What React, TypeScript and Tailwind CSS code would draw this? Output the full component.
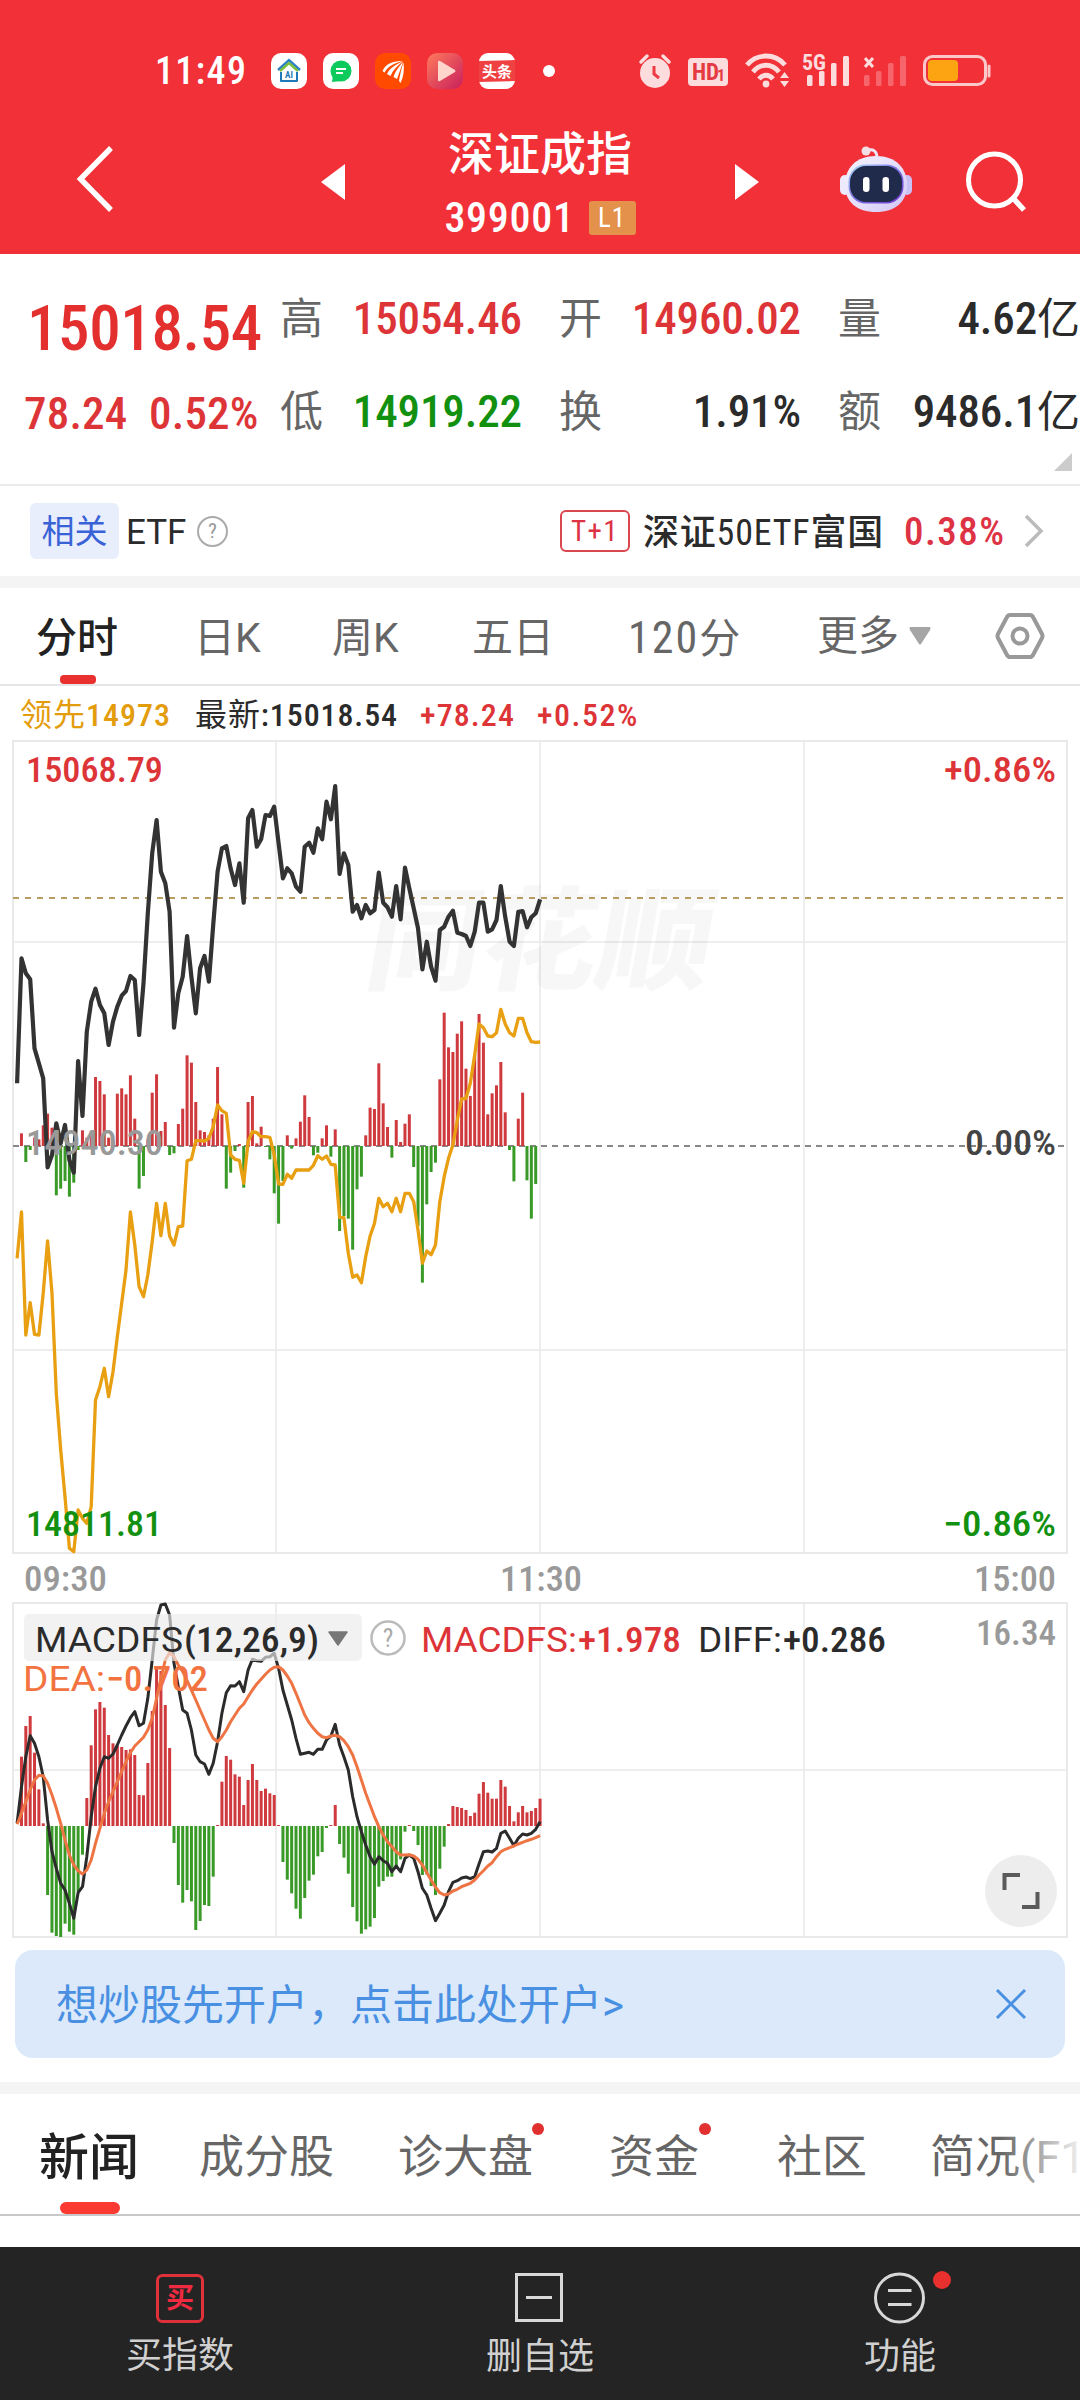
import type { ReactNode } from "react";

const PRICE = [
  1060, 685, 730, 748, 955, 1000, 1045, 1312, 1275, 1180, 1240, 1185, 1290, 1328, 993, 1158, 905, 815, 776, 825,
  850, 945, 875, 830, 797, 783, 738, 750, 915, 760, 550, 370, 270, 425, 460, 545, 893, 790, 740, 618,
  740, 850, 715, 678, 755, 585, 425, 355, 348, 415, 465, 400, 518, 265, 240, 350, 328, 255, 258, 230,
  340, 445, 415, 430, 470, 485, 350, 338, 368, 295, 328, 215, 268, 168, 432, 370, 405, 545, 525, 565,
  525, 550, 540, 428, 518, 532, 560, 468, 568, 413, 475, 535, 595, 718, 635, 710, 752, 600, 590, 560,
  542, 608, 612, 618, 648, 605, 518, 518, 605, 598, 570, 468, 560, 635, 648, 545, 543, 592, 562, 550, 508,
];

const LEAD = [
  1585, 1446, 1815, 1718, 1813, 1815, 1690, 1533, 1690, 1990, 2160, 2300, 2455, 2465, 2340, 2365, 2380, 2330, 2010, 1970,
  1915, 2000, 1925, 1820, 1720, 1620, 1446, 1545, 1670, 1700, 1635, 1535, 1420, 1517, 1420, 1518, 1545, 1490, 1488, 1292,
  1288, 1232, 1232, 1233, 1225, 1190, 1125, 1142, 1150, 1275, 1288, 1291, 1360, 1235, 1205, 1208, 1220, 1220, 1222, 1275,
  1362, 1363, 1333, 1345, 1320, 1320, 1320, 1320, 1306, 1277, 1288, 1278, 1303, 1305, 1462, 1463, 1570, 1642, 1635, 1658,
  1580, 1518, 1480, 1405, 1430, 1420, 1445, 1405, 1445, 1390, 1390, 1415, 1500, 1600, 1563, 1574, 1545, 1415, 1340, 1285,
  1245, 1170, 1107, 1105, 1060, 975, 882, 893, 918, 920, 908, 838, 882, 908, 918, 865, 865, 908, 935, 937, 936,
];

const FLOW = [
  0, 38, -48, -12, 25, 20, 62, 97, 55, -148, -128, -105, -152, -110, -12, 47, 25, 45, 207, 195,
  155, 25, 15, 157, 173, 155, 212, 82, -128, -90, 20, 160, 215, 45, 72, -27, -22, 66, 112, 272,
  250, 132, 47, 42, 32, 82, 237, 95, -128, -80, -15, 6, -125, 132, 150, 8, 58, -2, -40, -142,
  -233, -105, 32, -8, 23, 73, 152, 87, -28, -20, 23, 62, -32, 50, -255, -210, -218, -311, -130, -92,
  32, 115, 111, 248, 128, 57, -35, 78, 12, 67, 95, -63, -240, -410, -175, -78, -50, 200, 400, 296,
  282, 337, 374, 232, 150, 275, 396, 310, 95, 158, 182, 252, 101, -12, -106, 82, 160, -103, -218, -114, 0,
];

const MACD = [
  0, 208, 300, 330, 220, 110, 8, -207, -320, -330, -333, -293, -317, -326, -197, -86, 84, 242, 350, 372,
  355, 273, 248, 240, 237, 228, 230, 213, 93, 92, 189, 345, 475, 465, 363, 234, -51, -177, -230, -192,
  -226, -312, -285, -237, -240, -152, 3, 133, 210, 199, 155, 148, 63, 138, 186, 138, 105, 112, 98, 93,
  3, -108, -161, -202, -248, -278, -216, -164, -146, -91, -78, -6, 3, 63, -54, -95, -143, -243, -286, -323,
  -310, -302, -276, -182, -165, -152, -152, -125, -100, -17, 3, -15, -57, -147, -145, -180, -207, -128, -62, 6,
  60, 57, 54, 48, 30, 40, 97, 132, 100, 82, 82, 138, 118, 60, 14, 41, 60, 41, 45, 54, 82,
];

const DIFF = [
  700, 590, 500, 437, 460, 500, 560, 690, 785, 835, 880, 900, 940, 985, 908, 890, 800, 680, 590, 535,
  500, 505, 492, 465, 435, 408, 383, 365, 407, 400, 325, 210, 90, 45, 42, 75, 220, 290, 360, 370,
  420, 495, 515, 522, 553, 520, 455, 370, 308, 287, 288, 275, 305, 240, 208, 212, 214, 202, 200, 190,
  235, 300, 345, 390, 445, 493, 490, 487, 493, 478, 478, 450, 438, 403, 465, 500, 540, 620, 680, 725,
  765, 800, 823, 800, 812, 820, 845, 828, 845, 805, 795, 805, 845, 895, 915, 955, 992, 970, 945, 905,
  877, 872, 864, 861, 866, 860, 822, 785, 783, 786, 775, 730, 723, 745, 767, 745, 732, 735, 730, 718, 695,
];

const DEA = [
  703, 670, 635, 600, 570, 556, 557, 580, 615, 655, 700, 750, 795, 825, 842, 852, 840, 810, 760, 715,
  670, 635, 605, 575, 545, 515, 488, 468, 455, 442, 420, 385, 325, 265, 210, 188, 200, 225, 245, 272,
  300, 330, 360, 390, 420, 445, 455, 440, 420, 395, 375, 355, 342, 320, 300, 282, 268, 253, 240, 232,
  230, 240, 258, 280, 310, 343, 375, 398, 415, 430, 440, 443, 438, 436, 440, 452, 470, 495, 530, 570,
  610, 645, 680, 710, 735, 755, 770, 785, 795, 795, 794, 798, 808, 825, 848, 870, 892, 908, 915, 912,
  903, 898, 890, 885, 880, 870, 855, 842, 828, 818, 800, 785, 778, 773, 768, 762, 757, 752, 748, 743, 737,
];

const px = (i: number) => 17.1 + i * 4.358;
const line = (d: number[], top: number) =>
  d.map((v, i) => `${px(i).toFixed(1)},${(top + v / 3).toFixed(1)}`).join(" ");

function Bars({ data, base }: { data: number[]; base: number }) {
  return (
    <g>
      {data.map((v, i) =>
        v === 0 ? null : (
          <rect
            key={i}
            x={px(i) - 1.5}
            width={3}
            y={v > 0 ? base - v / 3 : base}
            height={Math.max(1, Math.abs(v) / 3)}
            className={v > 0 ? "fill-[#cf3a3e]" : "fill-[#3a9a28]"}
          />
        )
      )}
    </g>
  );
}

function Label({
  x,
  y,
  w,
  className,
  children,
  wide,
}: {
  x: number;
  y: number;
  w: number;
  className: string;
  children: ReactNode;
  wide?: boolean;
}) {
  return (
    <text
      x={x}
      y={y}
      textLength={w}
      lengthAdjust="spacingAndGlyphs"
      className={(wide ? "font-['Roboto',sans-serif] " : "font-['Roboto_Condensed',sans-serif] font-medium ") + "text-[35px] " + className}
    >
      {children}
    </text>
  );
}

function StatusBar() {
  return (
    <div className="flex h-[36px] items-center pl-[155px]">
      <span className="w-[116px] text-[38px] leading-[36px] font-medium tracking-[1.3px]">11:49</span>
      <div className="flex gap-4">
        <svg width="36" height="36" viewBox="0 0 36 36">
          <rect width="36" height="36" rx="10" fill="#fff" />
          <path d="M7 17 L18 7 L29 17" fill="none" stroke="#2b7fc4" strokeWidth="2.4" />
          <path d="M9 18 L18 10 L27 18" fill="none" stroke="#7cbf3f" strokeWidth="2.4" />
          <path d="M10 19 V28 H26 V19" fill="none" stroke="#1f78b8" strokeWidth="2" strokeLinejoin="round" />
          <text x="18" y="25" textAnchor="middle" className="fill-[#1f78b8] text-[9px] font-bold">AI</text>
        </svg>
        <svg width="36" height="36" viewBox="0 0 36 36">
          <rect width="36" height="36" rx="10" fill="#fff" />
          <circle cx="18" cy="18" r="10.5" fill="#0ccb5c" />
          <path d="M10 22 L9 29 L18 28Z" fill="#0ccb5c" />
          <path d="M13 16 H23 M13 20 H20" stroke="#fff" strokeWidth="1.8" />
        </svg>
        <svg width="36" height="36" viewBox="0 0 36 36">
          <rect width="36" height="36" rx="10" fill="#ff4a00" />
          <path d="M7.500 18 C11 10 19 8 28 8 C20 10 13 13 9.500 19.500Z" fill="#fff" />
          <path d="M12 21 C15 15 21 11 28 8.500 C22 13 18 17 15.500 23Z" fill="#fff" />
          <path d="M18.500 24 C20 19 24 13 28.300 9 C26 15 24 20 22 26Z" fill="#fff" />
          <path d="M24 28 C25 21 26.500 15 28.500 9.500 C29.500 17 28.500 24 25.500 30Z" fill="#fff" />
        </svg>
        <svg width="36" height="36" viewBox="0 0 36 36">
          <defs>
            <linearGradient id="play" x1="0" y1="0" x2="1" y2="1">
              <stop offset="0" stopColor="#ff7a5c" />
              <stop offset="1" stopColor="#c81f5c" />
            </linearGradient>
          </defs>
          <rect width="36" height="36" rx="10" fill="url(#play)" />
          <path d="M11 9 Q11 7 13 8 L28 17 Q29 18 28 19 L13 28 Q11 29 11 27Z" fill="#ffd5cc" />
        </svg>
        <svg width="36" height="36" viewBox="0 0 36 36">
          <rect width="36" height="36" rx="9" fill="#fff" />
          <path d="M0 8 L36 7 V28 L0 29Z" fill="#f04142" />
          <text x="18" y="24" textAnchor="middle" className="fill-white text-[15px] font-bold">头条</text>
        </svg>
      </div>
      <span className="ml-[28px] h-3 w-3 rounded-full bg-white" />
      <div className="ml-[84px] flex h-[36px] items-center">
        <svg width="32" height="36" viewBox="0 0 32 36" className="mr-[17px]">
          <circle cx="16" cy="20" r="15" fill="#fcdcdd" />
          <path d="M2 9 L8 3 M30 9 L24 3" stroke="#fcdcdd" strokeWidth="3.4" strokeLinecap="round" />
          <path d="M15 13 V21 L20 25" fill="none" stroke="#ee3a42" strokeWidth="3" />
        </svg>
        <svg width="40" height="36" viewBox="0 0 40 36" className="mr-[17px]">
          <rect y="5" width="40" height="28" rx="4" fill="#fcdcdd" />
          <text x="4" y="27" className="fill-[#e63a42] text-[23px] font-bold">HD</text>
          <text x="29" y="28" className="fill-[#e63a42] text-[16px] font-bold">1</text>
        </svg>
        <svg width="46" height="36" viewBox="0 0 46 36" className="mr-[12px]">
          <g fill="none" stroke="#fcdcdd" strokeWidth="4.8">
            <path d="M2 12 C12 0 30 0 40 12" />
            <path d="M8 19 C15 10 27 10 34 19" />
            <path d="M14 26 C18 21 24 21 28 26" />
          </g>
          <circle cx="21" cy="31" r="3.4" fill="#fcdcdd" />
          <path d="M35 25 L39.500 19 L44 25Z M35 28 L39.500 34 L44 28Z" fill="#fcdcdd" />
        </svg>
        <svg width="48" height="36" viewBox="0 0 48 36" className="mr-[13px] overflow-visible">
          <text x="-1" y="17" className="fill-[#fcdcdd] text-[22px] font-bold">5G</text>
          <g fill="#fcdcdd">
            <rect x="4" y="22" width="5.500" height="11" rx="1.500" />
            <rect x="16" y="18" width="5.500" height="15" rx="1.500" />
            <rect x="28" y="10" width="5.500" height="23" rx="1.500" />
            <rect x="40" y="3" width="6" height="30" rx="1.500" />
          </g>
        </svg>
        <svg width="46" height="36" viewBox="0 0 46 36" className="mr-[13px]">
          <path d="M1 5 L9 14 M9 5 L1 14" stroke="#fcdcdd" strokeWidth="3" />
          <g fill="#f6656b">
            <rect x="0" y="22" width="5.500" height="11" rx="1.500" />
            <rect x="12" y="18" width="5.500" height="15" rx="1.500" />
            <rect x="24" y="10" width="5.500" height="23" rx="1.500" />
            <rect x="36" y="3" width="6" height="30" rx="1.500" />
          </g>
        </svg>
        <svg width="68" height="36" viewBox="0 0 68 36">
          <rect x="1.500" y="3.500" width="61" height="28" rx="8" fill="none" stroke="#fbc8ca" strokeWidth="3" />
          <rect x="5" y="7" width="30" height="21" rx="4" fill="#fda413" />
          <path d="M66 13 V23" stroke="#fbc8ca" strokeWidth="3" strokeLinecap="round" />
        </svg>
      </div>
    </div>
  );
}

function Robot() {
  return (
    <svg width="72" height="68" viewBox="0 0 72 68">
      <defs>
        <linearGradient id="shell" x1="0" y1="0" x2="1" y2="1">
          <stop offset="0" stopColor="#f4f3ff" />
          <stop offset="0.600" stopColor="#e3dcfa" />
          <stop offset="1" stopColor="#cfc4f5" />
        </linearGradient>
        <linearGradient id="rim" x1="0" y1="0" x2="1" y2="1">
          <stop offset="0" stopColor="#a9dcf5" />
          <stop offset="0.500" stopColor="#7c6fe0" />
          <stop offset="1" stopColor="#6a35c8" />
        </linearGradient>
      </defs>
      <path d="M26 5 C33 2 37 5 37 12" fill="none" stroke="#efe6f5" strokeWidth="3" />
      <circle cx="26" cy="5" r="4.500" fill="#f3dfe6" />
      <rect x="0" y="29" width="10" height="20" rx="5" fill="#eceafc" />
      <rect x="62" y="29" width="10" height="20" rx="5" fill="#c9c0f5" />
      <path d="M36 10 C56 10 67 22 67 39 C67 56 55 66 36 66 C17 66 5 56 5 39 C5 22 16 10 36 10Z" fill="url(#shell)" />
      <rect x="8.500" y="18.500" width="55" height="39" rx="17" fill="url(#rim)" />
      <rect x="10" y="20" width="52" height="36" rx="16" fill="#202b4c" />
      <rect x="23" y="31" width="6.500" height="15" rx="3.200" fill="#fff" />
      <rect x="42.500" y="31" width="6.500" height="15" rx="3.200" fill="#fff" />
    </svg>
  );
}

function Header() {
  return (
    <header className="h-[254px] bg-[#f13038] pt-[53px] text-white">
      <StatusBar />
      <div className="flex h-[165px] pl-[74px]">
        <svg width="40" height="70" viewBox="0 0 40 70" className="mt-[55px]">
          <path d="M37 4 L6.500 35 L37 66" fill="none" stroke="#fff" strokeWidth="5.500" />
        </svg>
        <svg width="24" height="36" viewBox="0 0 24 36" className="mt-[75px] ml-[207px]">
          <path d="M0 18 L24 0 V36Z" fill="#fff" />
        </svg>
        <div className="flex w-[390px] flex-col items-center">
          <h1 className="mt-[37px] text-[46px] leading-[56px] font-medium">深证成指</h1>
          <div className="mt-[18px] flex h-[36px] items-center">
            <span className="text-[42px] leading-[36px] font-medium tracking-[0.7px]">399001</span>
            <span className="ml-[14px] flex h-[34px] w-[47px] items-center justify-center rounded-[3px] bg-[#e3914b] text-[27px] leading-[34px] tracking-[1px]">
              L1
            </span>
          </div>
        </div>
        <svg width="24" height="36" viewBox="0 0 24 36" className="mt-[75px]">
          <path d="M24 18 L0 0 V36Z" fill="#fff" />
        </svg>
        <div className="mt-[57px] ml-[81px]">
          <Robot />
        </div>
        <svg width="62" height="62" viewBox="0 0 62 62" className="mt-[62px] ml-[54px]">
          <circle cx="28.500" cy="29" r="26" fill="none" stroke="#fff" strokeWidth="5" />
          <path d="M47 47 L58 59" stroke="#fff" strokeWidth="5.500" />
        </svg>
      </div>
    </header>
  );
}

function Cell({ label, value, color }: { label: string; value: ReactNode; color: string }) {
  return (
    <div className="flex h-[50px] w-[242px] items-center justify-between whitespace-nowrap">
      <span className="text-[43px] leading-[50px] text-[#666]">{label}</span>
      <span className={"text-[45px] leading-[50px] font-medium tracking-[-0.1px] " + color}>{value}</span>
    </div>
  );
}

function Yi({ children }: { children: ReactNode }) {
  return (
    <>
      {children}
      <span className="text-[43px] font-normal">亿</span>
    </>
  );
}

function Quote() {
  return (
    <section className="relative flex h-[232px] border-b-2 border-[#ebebeb]">
      <div className="w-[280px]">
        <div className="mt-[43px] pl-[27px] text-[63px] leading-[64px] font-medium tracking-[-0.4px] text-[#e3302f]">15018.54</div>
        <div className="mt-[28px] flex pl-[24px] text-[45px] leading-[50px] font-medium tracking-[0.2px] text-[#dd3438]">
          <span className="w-[125px]">78.24</span>
          <span>0.52%</span>
        </div>
      </div>
      <div className="grid w-[800px] grid-cols-[279px_279px_242px] grid-rows-[50px_50px] gap-y-[43px] pt-[40px]">
        <Cell label="高" value="15054.46" color="text-[#dd3438]" />
        <Cell label="开" value="14960.02" color="text-[#dd3438]" />
        <Cell label="量" value={<Yi>4.62</Yi>} color="text-[#2b2b2b]" />
        <Cell label="低" value="14919.22" color="text-[#12900f]" />
        <Cell label="换" value="1.91%" color="text-[#2b2b2b]" />
        <Cell label="额" value={<Yi>9486.1</Yi>} color="text-[#2b2b2b]" />
      </div>
      <svg width="18" height="18" viewBox="0 0 18 18" className="absolute right-[8px] bottom-[13px]">
        <path d="M18 0 V18 H0Z" fill="#ccc" />
      </svg>
    </section>
  );
}

function EtfRow() {
  return (
    <section className="flex h-[90px] items-center pl-[30px] whitespace-nowrap">
      <span className="flex h-[56px] w-[89px] items-center justify-center rounded-[6px] bg-[#e8eefc] pt-[2px] text-[33px] leading-[54px] text-[#3a62d7]">
        相关
      </span>
      <span className="ml-[7px] w-[71px] pt-[3px] font-['Roboto',sans-serif] text-[35px] leading-[40px] text-[#2b2b2b]">ETF</span>
      <span className="flex h-[31px] w-[31px] items-center justify-center rounded-full border-2 border-[#aaa] text-[21px] leading-[28px] text-[#999]">
        ?
      </span>
      <span className="ml-[332px] flex h-[42px] w-[70px] items-center justify-center rounded-[6px] border-2 border-[#d8484e] text-[29px] leading-[38px] tracking-[1.4px] text-[#dd3344]">
        T+1
      </span>
      <span className="ml-[13px] w-[261px] pt-[3px] text-[36px] leading-[40px] font-[450] tracking-[0.8px] text-[#2b2b2b]">深证50ETF富国</span>
      <span className="w-[120px] pt-[2px] text-[39px] leading-[40px] font-medium tracking-[1.5px] text-[#dd3344]">0.38%</span>
      <svg width="20" height="34" viewBox="0 0 20 34">
        <path d="M2 2 L17 17 L2 32" fill="none" stroke="#bbb" strokeWidth="3.500" />
      </svg>
    </section>
  );
}

function PeriodTabs() {
  return (
    <nav className="flex h-[98px] border-b-2 border-[#e6e6e6] pl-[36px] text-[41px] leading-[100px] whitespace-nowrap text-[#666]">
      <div className="relative w-[158px] shrink-0 font-medium text-[#222]">
        <span>分时</span>
        <span className="absolute bottom-0 left-[24px] h-[9px] w-[36px] rounded-[4px] bg-[#e8302f]" />
      </div>
      <div className="w-[138px] shrink-0">日<span className="font-['Roboto',sans-serif]">K</span></div>
      <div className="w-[140px] shrink-0">周<span className="font-['Roboto',sans-serif]">K</span></div>
      <div className="w-[156px] shrink-0">五日</div>
      <div className="w-[189px] shrink-0"><span className="text-[44px] tracking-[2px]">120</span>分</div>
      <div className="flex w-[178px] shrink-0 items-center">
        更多
        <svg width="22" height="18" viewBox="0 0 22 18" className="ml-[10px]">
          <path d="M1 0 H21 Q22 1 21 3 L12 17 Q11 18 10 17 L1 3 Q0 1 1 0Z" fill="#a5a5a5" />
        </svg>
      </div>
      <svg width="50" height="48" viewBox="0 0 50 48" className="mt-[24px] shrink-0">
        <path d="M15 3 H35 Q37 3 38 5 L47 22 Q48 24 47 26 L38 43 Q37 45 35 45 H15 Q13 45 12 43 L3 26 Q2 24 3 22 L12 5 Q13 3 15 3Z" fill="none" stroke="#999" strokeWidth="4" />
        <circle cx="25" cy="24" r="7.500" fill="none" stroke="#999" strokeWidth="4" />
      </svg>
    </nav>
  );
}

function Legend() {
  return (
    <div className="flex h-[54px] pl-[20px] text-[32px] leading-[58px] font-medium whitespace-nowrap">
      <span className="w-[175px] tracking-[1px] text-[#e39c0c]"><span className="font-normal">领先</span>14973</span>
      <span className="w-[225px] tracking-[0.9px] text-[#2b2b2b]"><span className="font-normal">最新</span>:15018.54</span>
      <span className="w-[117px] tracking-[1.1px] text-[#dd3438]">+78.24</span>
      <span className="tracking-[1.5px] text-[#dd3438]">+0.52%</span>
    </div>
  );
}

function IntradayChart() {
  return (
    <svg width="1080" height="863" viewBox="0 740 1080 863" className="block">
      <g stroke="#e9e9e9" strokeWidth="2" fill="none">
        <rect x="13" y="740" width="1054" height="813" />
        <path d="M276 740 V1553 M540 740 V1553 M804 740 V1553 M13 942 H1067 M13 1350 H1067" strokeWidth="1.500" />
        <path d="M13 741 H1067" />
      </g>
      <text
        x="0"
        y="0"
        textLength="345"
        lengthAdjust="spacingAndGlyphs"
        transform="translate(362 981) skewX(-10)"
        className="fill-black/3 font-['Noto_Sans_CJK_SC',sans-serif] text-[112px] font-black"
      >
        同花顺
      </text>
      <path d="M13 898 H1067" stroke="#bb9c60" strokeWidth="1.800" strokeDasharray="6 6" />
      <path d="M13 1146 H1067" stroke="#888" strokeWidth="1.800" strokeDasharray="6 5" />
      <Bars data={FLOW} base={1146} />
      <polyline points={line(PRICE, 730)} fill="none" stroke="#333" strokeWidth="4.200" strokeLinejoin="round" />
      <polyline points={line(LEAD, 730)} fill="none" stroke="#e89f12" strokeWidth="3.300" strokeLinejoin="round" />
      <Label x={26} y={782} w={137} className="fill-[#dd3438]">15068.79</Label>
      <Label x={944} y={782} w={112} className="fill-[#dd3438]">+0.86%</Label>
      <Label x={26} y={1155} w={137} className="fill-[#999]">14940.30</Label>
      <Label x={965} y={1155} w={91} className="fill-[#444]">0.00%</Label>
      <Label x={26} y={1536} w={136} className="fill-[#12900f]">14811.81</Label>
      <Label x={943} y={1536} w={113} className="fill-[#12900f]">−0.86%</Label>
      <Label x={24} y={1591} w={83} className="fill-[#999]">09:30</Label>
      <Label x={500} y={1591} w={82} className="fill-[#999]">11:30</Label>
      <Label x={974} y={1591} w={82} className="fill-[#999]">15:00</Label>
    </svg>
  );
}

function MacdChart() {
  return (
    <svg width="1080" height="347" viewBox="0 1603 1080 347" className="block overflow-visible">
      <g stroke="#e9e9e9" strokeWidth="2" fill="none">
        <rect x="13" y="1603" width="1054" height="334" />
        <path d="M276 1603 V1937 M540 1603 V1937 M804 1603 V1937 M13 1770 H1067" strokeWidth="1.500" />
      </g>
      <Bars data={MACD} base={1826} />
      <polyline points={line(DIFF, 1590)} fill="none" stroke="#2b2b2b" strokeWidth="3" strokeLinejoin="round" />
      <polyline points={line(DEA, 1590)} fill="none" stroke="#ee7444" strokeWidth="3" strokeLinejoin="round" />
      <rect x="24" y="1614" width="338" height="47" rx="5" className="fill-[#ebebeb]/65" />
      <Label x={35} y={1652} w={148} wide className="fill-[#2b2b2b]">MACDFS</Label>
      <Label x={184} y={1652} w={135} className="fill-[#2b2b2b]">(12,26,9)</Label>
      <path d="M329 1632 H347 L338 1645Z" fill="#777" stroke="#777" strokeWidth="1.500" strokeLinejoin="round" />
      <circle cx="388" cy="1638" r="16.500" fill="none" stroke="#bbb" strokeWidth="2.500" />
      <text x="388" y="1647" textAnchor="middle" className="fill-[#aaa] text-[25px]">?</text>
      <Label x={421} y={1652} w={156} wide className="fill-[#dd3438]">MACDFS:</Label>
      <Label x={578} y={1652} w={103} className="fill-[#dd3438]">+1.978</Label>
      <Label x={698} y={1652} w={84} wide className="fill-[#2b2b2b]">DIFF:</Label>
      <Label x={783} y={1652} w={103} className="fill-[#2b2b2b]">+0.286</Label>
      <Label x={976} y={1645} w={80} className="fill-[#999]">16.34</Label>
      <Label x={23} y={1691} w={82} wide className="fill-[#f27340]">DEA:</Label>
      <Label x={106} y={1691} w={102} className="fill-[#f27340]">−0.702</Label>
      <circle cx="1021" cy="1891" r="36" fill="#ededed" />
      <path d="M1004.500 1890 V1875 H1020 M1022 1907 H1037.500 V1892" fill="none" stroke="#5a5a5a" strokeWidth="4" />
    </svg>
  );
}

function Banner() {
  return (
    <div className="mx-[15px] flex h-[108px] items-center justify-between rounded-[18px] bg-[#dbe9fa] pr-[38px] pl-[41px] text-[#4a90e2]">
      <span className="pt-[4px] text-[42px] leading-[104px]">
        想炒股先开户，点击此处开户<span className="font-['Roboto',sans-serif]">&gt;</span>
      </span>
      <svg width="32" height="32" viewBox="0 0 32 32">
        <path d="M2 2 L30 30 M30 2 L2 30" stroke="#4a90e2" strokeWidth="3" />
      </svg>
    </div>
  );
}

function NewsTabs() {
  return (
    <nav className="relative flex h-[122px] overflow-hidden border-b-2 border-[#c8c8c8] pl-[39px] text-[45px] leading-[128px] whitespace-nowrap text-[#666]">
      <div className="relative w-[160px] shrink-0 font-medium text-[#222]">
        <span className="text-[50px]">新闻</span>
        <span className="absolute bottom-0 left-[21px] h-[12px] w-[60px] rounded-[6px] bg-[#fb3a33]" />
      </div>
      <div className="w-[199px] shrink-0">成分股</div>
      <div className="relative w-[211px] shrink-0">
        诊大盘
        <span className="absolute top-[29px] left-[134px] h-3 w-3 rounded-full bg-[#e0302f]" />
      </div>
      <div className="relative w-[168px] shrink-0">
        资金
        <span className="absolute top-[29px] left-[90px] h-3 w-3 rounded-full bg-[#e0302f]" />
      </div>
      <div className="w-[153px] shrink-0">社区</div>
      <div className="shrink-0">简况<span className="font-['Roboto',sans-serif]">(F10)</span></div>
      <div className="absolute top-0 right-0 h-full w-[80px] bg-linear-to-r from-white/0 to-white/90" />
    </nav>
  );
}

function BottomBar() {
  return (
    <footer className="grid h-[153px] grid-cols-3 bg-[#242424] text-[36px] leading-[44px] text-[#d0d0d0]">
      <div className="flex flex-col items-center pt-[25px]">
        <svg width="52" height="52" viewBox="0 0 52 52">
          <rect x="3.500" y="3.500" width="45" height="46" rx="5" fill="none" stroke="#e0313b" strokeWidth="3" />
          <text x="26" y="36" textAnchor="middle" className="fill-[#f02a40] text-[28px] font-bold">买</text>
        </svg>
        <span className="mt-[10px]">买指数</span>
      </div>
      <div className="flex flex-col items-center pt-[25px]">
        <svg width="52" height="52" viewBox="0 0 52 52">
          <rect x="2.500" y="2.500" width="45" height="46" fill="none" stroke="#d8d8d8" strokeWidth="3" />
          <path d="M12 25.500 H38" stroke="#d8d8d8" strokeWidth="3" />
        </svg>
        <span className="mt-[11px]">删自选</span>
      </div>
      <div className="relative flex flex-col items-center pt-[25px]">
        <svg width="52" height="52" viewBox="0 0 52 52">
          <circle cx="25.500" cy="26" r="24" fill="none" stroke="#d8d8d8" strokeWidth="3" />
          <path d="M14 18.500 H37.500 M14 32.500 H37.500" stroke="#d8d8d8" strokeWidth="3" />
        </svg>
        <span className="mt-[11px]">功能</span>
        <span className="absolute top-[24px] left-[213px] h-[18px] w-[18px] rounded-full bg-[#e8302f]" />
      </div>
    </footer>
  );
}

export default function App() {
  return (
    <div className="h-[2400px] w-[1080px] overflow-hidden bg-white font-['Roboto_Condensed','Noto_Sans_CJK_SC',sans-serif]">
      <Header />
      <Quote />
      <EtfRow />
      <div className="h-[12px] bg-[#f4f4f4]" />
      <PeriodTabs />
      <Legend />
      <IntradayChart />
      <MacdChart />
      <Banner />
      <div className="mt-[24px] h-[12px] bg-[#f4f4f4]" />
      <NewsTabs />
      <div className="h-[31px]" />
      <BottomBar />
    </div>
  );
}
